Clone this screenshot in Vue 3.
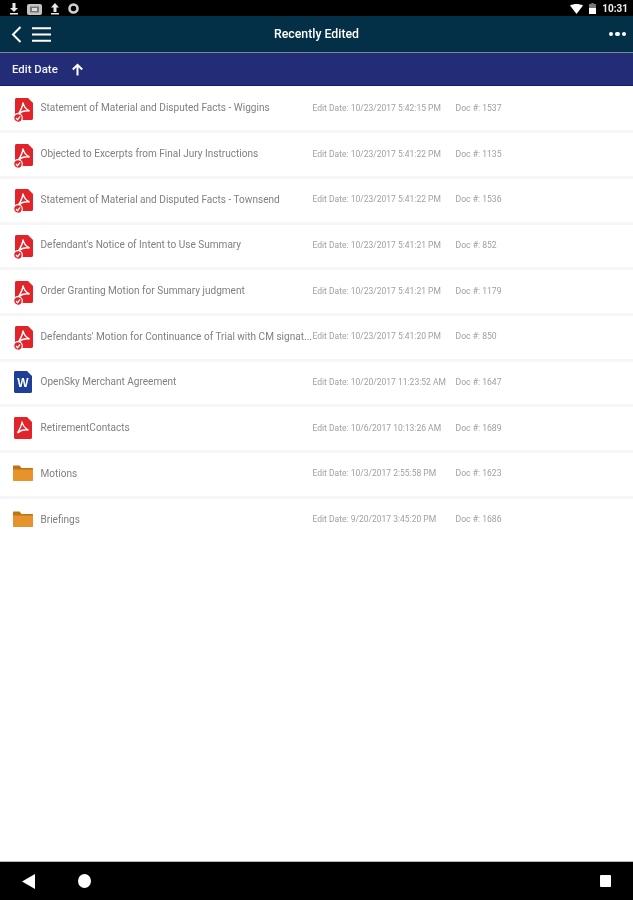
<script setup>
const rows = [
  { type: 'sign', name: 'Statement of Material and Disputed Facts - Wiggins', date: '10/23/2017 5:42:15 PM', doc: '1537' },
  { type: 'sign', name: 'Objected to Excerpts from Final Jury Instructions', date: '10/23/2017 5:41:22 PM', doc: '1135' },
  { type: 'sign', name: 'Statement of Material and Disputed Facts - Townsend', date: '10/23/2017 5:41:22 PM', doc: '1536' },
  { type: 'sign', name: "Defendant's Notice of Intent to Use Summary", date: '10/23/2017 5:41:21 PM', doc: '852' },
  { type: 'sign', name: 'Order Granting Motion for Summary judgment', date: '10/23/2017 5:41:21 PM', doc: '1179' },
  { type: 'sign', name: "Defendants' Motion for Continuance of Trial with CM signat...", date: '10/23/2017 5:41:20 PM', doc: '850' },
  { type: 'word', name: 'OpenSky Merchant Agreement', date: '10/20/2017 11:23:52 AM', doc: '1647' },
  { type: 'pdf', name: 'RetirementContacts', date: '10/6/2017 10:13:26 AM', doc: '1689' },
  { type: 'folder', name: 'Motions', date: '10/3/2017 2:55:58 PM', doc: '1623' },
  { type: 'folder', name: 'Briefings', date: '9/20/2017 3:45:20 PM', doc: '1686' },
]
</script>

<template>
  <div class="screen">
    <div class="status">
      <div class="status-left">
        <svg width="10" height="12" viewBox="0 0 10 12"><path d="M3.500 0h3v5H9L5 9 1 5h2.500zM1 10h8v1.600H1z" fill="#e8e8e8"/></svg>
        <svg width="15" height="12" viewBox="0 0 15 12"><rect x="0" y="1" width="15" height="11" rx="2" fill="#c4c4c4"/><rect x="3" y="3.500" width="9" height="6" fill="#777"/><rect x="5" y="5" width="5" height="3" fill="#ddd"/></svg>
        <svg width="10" height="12" viewBox="0 0 10 12"><path d="M5 0l4 4.500H6.500V9h-3V4.500H1zM1 10h8v1.600H1z" fill="#e8e8e8"/></svg>
        <svg width="11" height="11" viewBox="0 0 11 11"><circle cx="5.500" cy="5.500" r="4" fill="none" stroke="#d0d0d0" stroke-width="2.600"/></svg>
      </div>
      <div class="status-right">
        <svg width="13" height="10" viewBox="0 0 13 10"><path d="M0 1.500C3.800-.5 9.200-.5 13 1.500L6.500 10z" fill="#fff"/></svg>
        <svg width="7" height="11" viewBox="0 0 7 11"><path d="M2.300 0h2.400v1H7v10H0V1h2.300z" fill="#777"/><rect y="5" width="7" height="6" fill="#fff"/></svg>
        <span class="clock">10:31</span>
      </div>
    </div>

    <header class="appbar">
      <div class="appbar-left">
        <svg width="11" height="17" viewBox="0 0 11 17"><path d="M9.500 1L2 8.500 9.500 16" fill="none" stroke="#fff" stroke-width="2"/></svg>
        <svg width="19" height="15" viewBox="0 0 19 15"><path d="M0 1.200h19M0 7.500h19M0 13.800h19" stroke="#fff" stroke-width="2"/></svg>
      </div>
      <h1 class="title">Recently Edited</h1>
      <div class="dots"><i></i><i></i><i></i></div>
    </header>

    <div class="sortbar">
      <span class="sort-label">Edit Date</span>
      <svg width="13" height="13" viewBox="0 0 13 13"><path d="M6.500 12.500V2M1.800 6.500L6.500 1.800l4.700 4.700" fill="none" stroke="#fff" stroke-width="2"/></svg>
    </div>

    <main class="list">
      <div v-for="row in rows" :key="row.doc" class="row">
        <div class="icon">
          <svg v-if="row.type === 'folder'" class="folder" width="20" height="16" viewBox="0 0 20 16">
            <path d="M0 1.500C0 .9.400.5 1 .5h5.500L8.500 3H19c.6 0 1 .4 1 1v2H0z" fill="#bd7316"/>
            <path d="M0 4.500h20V15c0 .6-.4 1-1 1H1c-.6 0-1-.4-1-1z" fill="#e5932a"/>
          </svg>
          <svg v-else-if="row.type === 'word'" width="18" height="22" viewBox="0 0 18 22">
            <path d="M1.500 0H13l5 5v15.500c0 .8-.7 1.500-1.500 1.500h-15C.7 22 0 21.300 0 20.500v-19C0 .7.700 0 1.500 0z" fill="#1d3f96"/>
            <text x="9" y="15.500" text-anchor="middle" class="w-glyph">W</text>
          </svg>
          <svg v-else-if="row.type === 'pdf'" width="18" height="22" viewBox="0 0 18 22">
            <path d="M1.500 0H13l5 5v15.500c0 .8-.7 1.500-1.500 1.500h-15C.7 22 0 21.300 0 20.500v-19C0 .7.700 0 1.500 0z" fill="#e1232a"/>
            <path d="M8 4.500c.5 3 1.500 6 6.500 8.500-4-.8-7.500 0-11 3 2-3.500 4.500-7.500 4.500-11.500z" fill="none" stroke="#fff" stroke-width="1.300"/>
          </svg>
          <svg v-else class="signed" width="20" height="25" viewBox="0 0 20 25">
            <path d="M3.500 0H15l5 5v15.500c0 .8-.7 1.500-1.500 1.500h-15C2.700 22 2 21.300 2 20.500v-19C2 .7 2.700 0 3.500 0z" fill="#e1232a"/>
            <path d="M10 4.500c.5 3 1.500 6 6.500 8.500-4-.8-7.500 0-11 3 2-3.500 4.500-7.500 4.500-11.500z" fill="none" stroke="#fff" stroke-width="1.500"/>
            <circle cx="5" cy="20" r="4.300" fill="#e1232a" stroke="#fff" stroke-width="1.200"/>
            <path d="M3 20l1.600 1.700 2.500-3.300" fill="none" stroke="#fff" stroke-width="1.200"/>
          </svg>
        </div>
        <div class="name">{{ row.name }}</div>
        <div class="date">Edit Date: {{ row.date }}</div>
        <div class="doc">Doc #: {{ row.doc }}</div>
      </div>
    </main>

    <footer class="navbar">
      <svg width="13" height="15" viewBox="0 0 13 15"><path d="M13 0v15L0 7.500z" fill="#fff"/></svg>
      <span class="home"></span>
      <span class="recent"></span>
    </footer>
  </div>
</template>

<style scoped>
.screen {
  width: 633px;
  height: 900px;
  display: flex;
  flex-direction: column;
  background: #fff;
  font-family: Roboto, "Liberation Sans", sans-serif;
  overflow: hidden;
  filter: blur(0.6px);
}
.status {
  height: 16px;
  flex: none;
  background: #000;
  display: flex;
  align-items: center;
  justify-content: space-between;
  padding: 1px 5px 0 9px;
  box-sizing: border-box;
}
.status-left, .status-right { display: flex; align-items: center; }
.status-left { gap: 8px; }
.status-right { gap: 6px; }
.clock { color: #eee; font-size: 10px; font-weight: 700; }
.appbar {
  height: 36px;
  flex: none;
  background: #033046;
  border-bottom: 1px solid #7a8a94;
  display: grid;
  grid-template-columns: 1fr auto 1fr;
  align-items: center;
  padding: 0 7px 0 11px;
  box-sizing: content-box;
}
.appbar-left { display: flex; align-items: center; gap: 10px; }
.title { margin: 0 0 0 -4px; font-size: 12.3px; font-weight: 500; color: #fff; }
.dots { justify-self: end; display: flex; gap: 2px; }
.dots i { width: 4.500px; height: 4.500px; border-radius: 50%; background: #fff; }
.sortbar {
  height: 32px;
  flex: none;
  background: #232c77;
  border-bottom: 1px solid #0f1a78;
  display: flex;
  align-items: center;
  gap: 13px;
  padding: 0 12px;
}
.sort-label { color: #f2f2f8; font-size: 11.4px; font-weight: 500; }
.list { flex: 1; padding-top: 1.500px; }
.row {
  height: 45.700px;
  box-sizing: border-box;
  border-bottom: 3px solid #f6f6f6;
  display: flex;
  align-items: center;
  padding: 0 0 2px 12px;
  color: #8a8a8a;
}
.row:last-child { border-bottom-color: transparent; }
.icon { width: 28.500px; height: 22px; flex: none; display: flex; align-items: flex-start; padding-left: 2px; box-sizing: border-box; }
.signed { margin: 1px 0 0 -1px; }
.folder { margin: 3px 0 0 -1px; }
.name {
  width: 272px;
  flex: none;
  font-size: 10.050px;
  color: #808080;
  white-space: nowrap;
}
.date { width: 143px; flex: none; font-size: 8.500px; color: #a0a0a0; white-space: nowrap; }
.doc { font-size: 8.600px; color: #a0a0a0; white-space: nowrap; }
.w-glyph { font: 700 12px "Liberation Sans", sans-serif; fill: #fff; }
.navbar {
  height: 39px;
  flex: none;
  background: #000;
  display: flex;
  align-items: center;
  padding: 0 22px;
  border-top: 1px solid #bbb;
  box-sizing: border-box;
}
.home { width: 13px; height: 14px; border-radius: 50%; background: #fff; margin-left: 43px; }
.recent { width: 11px; height: 12px; border-radius: 1px; background: #fff; margin-left: auto; }
</style>
